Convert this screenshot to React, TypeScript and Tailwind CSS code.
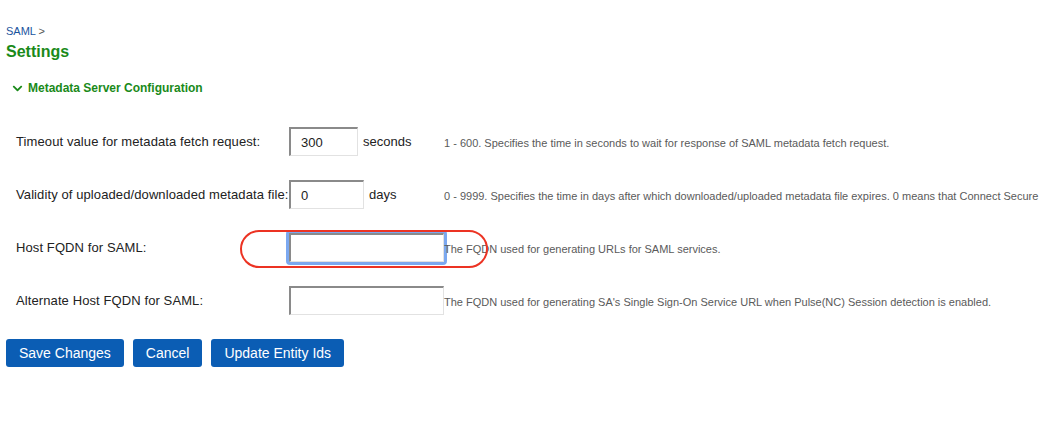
import { FaChevronDown } from 'react-icons/fa';

const rows = [
  {
    label: 'Timeout value for metadata fetch request:',
    value: '300',
    width: 'w-[69px]',
    unit: 'seconds',
    help: '1 - 600. Specifies the time in seconds to wait for response of SAML metadata fetch request.',
  },
  {
    label: 'Validity of uploaded/downloaded metadata file:',
    value: '0',
    width: 'w-[75px]',
    unit: 'days',
    help: '0 - 9999. Specifies the time in days after which downloaded/uploaded metadata file expires. 0 means that Connect Secure will never expire the metadata file.',
  },
  {
    label: 'Host FQDN for SAML:',
    value: '',
    width: 'w-[155px]',
    focused: true,
    help: 'The FQDN used for generating URLs for SAML services.',
  },
  {
    label: 'Alternate Host FQDN for SAML:',
    value: '',
    width: 'w-[155px]',
    help: "The FQDN used for generating SA's Single Sign-On Service URL when Pulse(NC) Session detection is enabled.",
  },
];

const buttons = ['Save Changes', 'Cancel', 'Update Entity Ids'];

export default function App() {
  return (
    <div className="relative w-[1040px] h-[434px] overflow-hidden bg-white font-['Liberation_Sans',Arial,sans-serif] text-[#222]">
      <div className="px-[6px] pt-[24px]">
        {/* Breadcrumb + title */}
        <div className="text-[11px] leading-[14px]">
          <span className="text-[#1a549e]">SAML</span>
          <span className="text-[#555]"> &gt;</span>
        </div>
        <h1 className="text-[16px] leading-[20px] font-bold text-[#1a8a1a] mt-[4px]">Settings</h1>

        {/* Section toggle */}
        <div className="flex items-center gap-[5px] pl-[6px] mt-[19px] text-[#1a8a1a]">
          <FaChevronDown size={11} />
          <span className="text-[12px] leading-[14px] font-bold">Metadata Server Configuration</span>
        </div>

        {/* Form rows */}
        <div className="mt-[32px] flex flex-col gap-[24px]">
          {rows.map((row) => (
            <div key={row.label} className="grid grid-cols-[283px_155px_1fr] items-center h-[29px]">
              <div className="pl-[10px] text-[13px] tracking-[0.1px] whitespace-nowrap">{row.label}</div>
              <div className="flex items-center">
                <div
                  className={
                    row.focused
                      ? 'rounded-[4px] border-[3px] border-[#7ba8f0] -m-[3px]'
                      : ''
                  }
                >
                  <input
                    readOnly
                    value={row.value}
                    className={`${row.width} h-[29px] px-[10px] text-[13px] bg-white border border-t-[2px] border-l-[2px] border-t-[#8a8a8a] border-l-[#8a8a8a] border-b-[#e2e2e2] border-r-[#e2e2e2] outline-none`}
                  />
                </div>
                {row.unit && <span className="ml-[5px] text-[13px]">{row.unit}</span>}
              </div>
              <div className="pt-[3px] text-[11px] text-[#5a5a5a] whitespace-nowrap">{row.help}</div>
            </div>
          ))}
        </div>

        {/* Actions */}
        <div className="mt-[24px] flex gap-[9px]">
          {buttons.map((b) => (
            <button
              key={b}
              className="h-[28px] px-[13px] rounded-[3px] bg-[#0b5db4] text-white text-[14px]"
            >
              {b}
            </button>
          ))}
        </div>
      </div>

      {/* Annotation ring */}
      <div className="absolute left-[240px] top-[230px] w-[248px] h-[38px] rounded-full border-2 border-[#ec3323] pointer-events-none" />
    </div>
  );
}
